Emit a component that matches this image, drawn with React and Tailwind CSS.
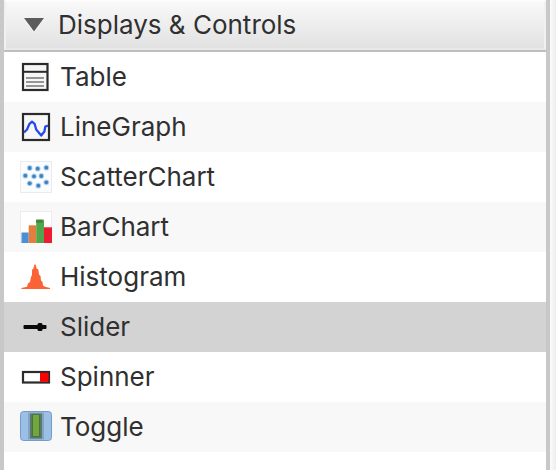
import { useState } from "react";

function TableIcon(){
  return (
    <svg viewBox="0 0 32 32" className="size-8 shrink-0" aria-hidden="true">
      <rect x="3" y="3" width="24.5" height="26" fill="#f6f6f6" stroke="#2b2b2b" strokeWidth="2.2" />
      <path d="M3 10.8H27" stroke="#2b2b2b" strokeWidth="2" />
      <path d="M6 17H24M6 21H24M6 25H24" stroke="#959595" strokeWidth="2" />
    </svg>
  );
}

function LineGraphIcon(){
  return (
    <svg viewBox="0 0 32 32" className="size-8 shrink-0" aria-hidden="true">
      <rect x="3" y="3" width="26" height="26" fill="#f7f7f7" stroke="#2b2b2b" strokeWidth="2.2" />
      <path d="M4 21.5L7 18.5L9.5 12.8L12 10.6L14.6 12.8L16.2 18.5L21.2 24.5L24.4 20.5L25.3 15.5L28 14.6" fill="none" stroke="#2549ee" strokeWidth="2.3" strokeLinejoin="round" />
    </svg>
  );
}

const dots = [[9.7, 7], [17.7, 7.7], [26.3, 6.7], [5.3, 14.7], [14, 15.3], [21.3, 15], [9.7, 22.3], [26.3, 21.3], [18.3, 24.7]];

function ScatterIcon(){
  return (
    <svg viewBox="0 0 32 32" className="size-8 shrink-0" aria-hidden="true">
      <rect x="0.5" y="0.5" width="31" height="31" fill="#fafcfe" stroke="#eee9ee" />
      {dots.map(([x, y])=>(
        <g key={`${x}-${y}`}>
          <circle cx={x} cy={y} r="2.9" fill="#b5d4ee" />
          <circle cx={x} cy={y} r="1.9" fill="#3f83bd" />
        </g>
      ))}
    </svg>
  );
}

function BarChartIcon(){
  return (
    <svg viewBox="0 0 32 32" className="size-8 shrink-0" aria-hidden="true">
      <rect x="0.5" y="0.5" width="31" height="31" fill="#ffffff" stroke="#ececf0" />
      <rect x="1.5" y="21.5" width="7.2" height="10.5" fill="#4b8fd4" />
      <rect x="8.7" y="14.3" width="7.5" height="17.7" fill="#e27f3f" />
      <rect x="16.2" y="8.7" width="7.8" height="23.3" fill="#4fa64b" />
      <rect x="16.2" y="8.7" width="6.5" height="3" fill="#43833c" />
      <rect x="24" y="16.3" width="8" height="15.7" fill="#ee1c32" />
    </svg>
  );
}

function HistogramIcon(){
  return (
    <svg viewBox="0 0 32 32" className="size-8 shrink-0" aria-hidden="true">
      <path d="M1.5 28V27L7 25.8L8 22.5L10 21L11 16L12 14V9L13.4 7.5L14.4 3.5H15.6L16.8 8H18.2L19 13.5L20.5 15L21 19.5L22.5 21L23 24.5L25 25.8L30 27V28Z" fill="#fb6235" />
    </svg>
  );
}

function SliderIcon(){
  return (
    <svg viewBox="0 0 32 32" className="size-8 shrink-0" aria-hidden="true">
      <rect x="3.5" y="14" width="23" height="4" rx="1" fill="#0a0a0a" />
      <rect x="17.5" y="12" width="5" height="8" rx="1.5" fill="#0a0a0a" />
    </svg>
  );
}

function SpinnerIcon(){
  return (
    <svg viewBox="0 0 32 32" className="size-8 shrink-0" aria-hidden="true">
      <rect x="3" y="11" width="26" height="10.5" fill="#ffffff" stroke="#2b2b2b" strokeWidth="2.2" />
      <rect x="20" y="11.8" width="8.5" height="9" fill="#fd0000" />
    </svg>
  );
}

function ToggleIcon(){
  return (
    <svg viewBox="0 0 32 32" className="size-8 shrink-0" aria-hidden="true">
      <rect x="0.5" y="0.5" width="31" height="29" rx="3" fill="#9bbfe5" stroke="#719dcc" />
      <rect x="8" y="1.5" width="16" height="27" fill="#83a5c5" />
      <rect x="10" y="2.5" width="12" height="25" rx="1" fill="#5b7868" />
      <rect x="12" y="3.5" width="8" height="22.5" fill="#4d6f45" />
      <rect x="13" y="4" width="6" height="21" fill="#70a83b" />
    </svg>
  );
}

const items = [
  { name: "Table", Icon: TableIcon },
  { name: "LineGraph", Icon: LineGraphIcon },
  { name: "ScatterChart", Icon: ScatterIcon },
  { name: "BarChart", Icon: BarChartIcon },
  { name: "Histogram", Icon: HistogramIcon },
  { name: "Slider", Icon: SliderIcon },
  { name: "Spinner", Icon: SpinnerIcon },
  { name: "Toggle", Icon: ToggleIcon },
];

export default function App(){
  const [open, setOpen] = useState(true);
  const [selected, setSelected] = useState("Slider");

  return (
    <div className="flex min-h-screen font-['Inter',sans-serif] text-[26px] leading-8 text-[#303030]">
      <section className="flex-1 min-w-0 border-x-4 border-[#c8c8c8] bg-white">
        <h2 className="border-b-2 border-[#bebebe]">
          <button
            className="flex w-full h-[50px] items-center gap-3.5 border-2 border-t-[#fcfcfc] border-x-[#f1f1f1] border-b-[#e9e9e9] bg-linear-to-b from-[#f9f9f9] to-[#e2e2e2] pl-4.5 text-left"
            aria-expanded={open}
            onClick={()=> setOpen(!open)}
          >
            <svg viewBox="0 0 20 16" className={`w-5 h-4 shrink-0 ${open ? "" : "-rotate-90"}`} aria-hidden="true">
              <path d="M0 2H20L10 16Z" fill="#fbfbfb" />
              <path d="M0 1H20L10 14.5Z" fill="#5c5c5c" />
            </svg>
            <span>Displays &amp; Controls</span>
          </button>
        </h2>

        {open && (
          <ul>
            {items.map(({ name, Icon })=>(
              <li key={name} className={selected===name ? "bg-[#d3d3d3]" : "even:bg-[#f8f8f8]"}>
                <button
                  className="flex w-full h-[50px] items-center gap-2 pl-4 text-left"
                  aria-pressed={selected===name}
                  onClick={()=> setSelected(name)}
                >
                  <Icon />
                  <span>{name}</span>
                </button>
              </li>
            ))}
          </ul>
        )}
      </section>
      <div className="w-1.5 bg-linear-to-r from-[#fcfcfc] to-[#ececec]" />
    </div>
  );
}
